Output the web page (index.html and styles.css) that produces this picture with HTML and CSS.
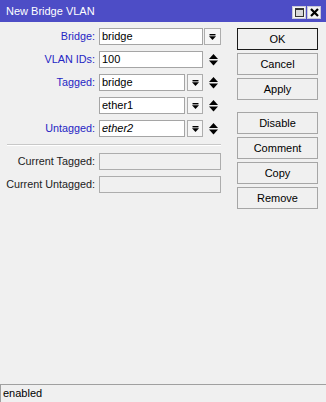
FILE: index.html
```html
<!DOCTYPE html>
<html>
<head>
<meta charset="utf-8">
<link rel="stylesheet" href="styles.css">
</head>
<body>
<div class="win">
  <div class="titlebar">
    <span class="title">New Bridge VLAN</span>
    <div class="tb-btns">
      <span class="tb-btn tb-max"><span class="max-sq"></span></span>
      <span class="tb-btn tb-close">
        <svg width="9" height="9" viewBox="0 0 9 9"><path d="M1 1 L8 8 M8 1 L1 8" stroke="#000" stroke-width="2.2" fill="none"/></svg>
      </span>
    </div>
  </div>
  <div class="main">
    <div class="form">
      <div class="row">
        <label class="lbl blue">Bridge:</label>
        <div class="field">
          <div class="input w-wide">bridge</div>
          <span class="dd dd-wide"><svg width="7" height="6" viewBox="0 0 7 6"><rect x="0.5" y="0" width="6" height="1.4" fill="#000"/><polygon points="0,2.2 7,2.2 3.5,6" fill="#000"/></svg></span>
        </div>
      </div>
      <div class="row">
        <label class="lbl blue">VLAN IDs:</label>
        <div class="field">
          <div class="input w-mid">100</div>
          <span class="ud"><svg width="9" height="12" viewBox="0 0 9 12"><polygon points="4.5,0 9,5 0,5" fill="#000"/><polygon points="0,6.5 9,6.5 4.5,11.5" fill="#000"/></svg></span>
        </div>
      </div>
      <div class="row">
        <label class="lbl blue">Tagged:</label>
        <div class="field">
          <div class="input w-short">bridge</div>
          <span class="dd"><svg width="7" height="6" viewBox="0 0 7 6"><rect x="0.5" y="0" width="6" height="1.4" fill="#000"/><polygon points="0,2.2 7,2.2 3.5,6" fill="#000"/></svg></span>
          <span class="ud"><svg width="9" height="12" viewBox="0 0 9 12"><polygon points="4.5,0 9,5 0,5" fill="#000"/><polygon points="0,6.5 9,6.5 4.5,11.5" fill="#000"/></svg></span>
        </div>
      </div>
      <div class="row">
        <label class="lbl"></label>
        <div class="field">
          <div class="input w-short">ether1</div>
          <span class="dd"><svg width="7" height="6" viewBox="0 0 7 6"><rect x="0.5" y="0" width="6" height="1.4" fill="#000"/><polygon points="0,2.2 7,2.2 3.5,6" fill="#000"/></svg></span>
          <span class="ud"><svg width="9" height="12" viewBox="0 0 9 12"><polygon points="4.5,0 9,5 0,5" fill="#000"/><polygon points="0,6.5 9,6.5 4.5,11.5" fill="#000"/></svg></span>
        </div>
      </div>
      <div class="row">
        <label class="lbl blue">Untagged:</label>
        <div class="field">
          <div class="input w-short ital">ether2</div>
          <span class="dd"><svg width="7" height="6" viewBox="0 0 7 6"><rect x="0.5" y="0" width="6" height="1.4" fill="#000"/><polygon points="0,2.2 7,2.2 3.5,6" fill="#000"/></svg></span>
          <span class="ud"><svg width="9" height="12" viewBox="0 0 9 12"><polygon points="4.5,0 9,5 0,5" fill="#000"/><polygon points="0,6.5 9,6.5 4.5,11.5" fill="#000"/></svg></span>
        </div>
      </div>
      <div class="sep"></div>
      <div class="row">
        <label class="lbl">Current Tagged:</label>
        <div class="field">
          <div class="input disabled w-full"></div>
        </div>
      </div>
      <div class="row">
        <label class="lbl">Current Untagged:</label>
        <div class="field">
          <div class="input disabled w-full"></div>
        </div>
      </div>
    </div>
    <div class="buttons">
      <div class="btn default">OK</div>
      <div class="btn">Cancel</div>
      <div class="btn">Apply</div>
      <div class="btn gap-top">Disable</div>
      <div class="btn">Comment</div>
      <div class="btn">Copy</div>
      <div class="btn">Remove</div>
    </div>
  </div>
  <div class="status">enabled</div>
</div>
</body>
</html>
```
FILE: styles.css
```css
html, body {
  margin: 0;
  padding: 0;
}
body {
  width: 326px;
  height: 402px;
  overflow: hidden;
  background: #f0f0f0;
  font-family: "Liberation Sans", Arial, sans-serif;
  font-size: 11px;
  color: #000;
}
.win {
  display: flex;
  flex-direction: column;
  height: 402px;
}
.titlebar {
  height: 22px;
  background: #4d4dc6;
  display: flex;
  align-items: center;
  justify-content: space-between;
  flex: none;
}
.title {
  color: #fff;
  padding-left: 6px;
  font-size: 11px;
}
.tb-btns {
  display: flex;
  gap: 1px;
  padding-right: 5px;
  padding-top: 3px;
}
.tb-btn {
  width: 14px;
  height: 13px;
  display: flex;
  align-items: center;
  justify-content: center;
  box-sizing: border-box;
  border: 1px solid #c8c8d8;
  background: #f4f4f4;
}
.max-sq {
  width: 9px;
  height: 9px;
  box-sizing: border-box;
  border: 1px solid #333;
  border-top-width: 2px;
  background: #d8d8d8;
}
.main {
  flex: 1;
  display: flex;
  padding-top: 6px;
}
.form {
  display: flex;
  flex-direction: column;
  width: 221px;
}
.row {
  display: flex;
  height: 17px;
  margin-bottom: 6px;
}
.lbl {
  width: 95px;
  text-align: right;
  line-height: 17px;
  margin-right: 4px;
  color: #222;
  white-space: nowrap;
  font-size: 10.8px;
}
.lbl.blue {
  color: #2626c4;
}
.field {
  display: flex;
  width: 122px;
}
.input {
  box-sizing: border-box;
  height: 17px;
  border: 1px solid #a5a5a5;
  background: #fff;
  line-height: 15px;
  padding-left: 2px;
}
.input.ital {
  font-style: italic;
}
.input.disabled {
  background: #f0f0f0;
  border-color: #adadad;
}
.w-wide { width: 104px; }
.w-mid { width: 104px; }
.w-short { width: 86px; }
.w-full { width: 122px; }
.dd {
  box-sizing: border-box;
  width: 16px;
  height: 17px;
  margin-left: 2px;
  border: 1px solid #adadad;
  background: #f6f6f6;
  display: flex;
  align-items: center;
  justify-content: center;
}
.dd-wide {
  width: 17px;
  margin-left: 1px;
}
.ud {
  width: 18px;
  display: flex;
  align-items: center;
  justify-content: center;
  padding-left: 2px;
  box-sizing: border-box;
}
.sep {
  margin: 1px 0 7px 7px;
  border-top: 1px solid #c8c8c8;
  border-bottom: 1px solid #fff;
  box-sizing: border-box;
  height: 2px;
}
.buttons {
  display: flex;
  flex-direction: column;
  margin-left: 16px;
  width: 81px;
}
.btn {
  box-sizing: border-box;
  height: 22px;
  margin-bottom: 3px;
  border: 1px solid #a6a6a6;
  background: #f0f0f0;
  text-align: center;
  line-height: 20px;
}
.btn.default {
  border-color: #1a1a1a;
}
.btn.gap-top {
  margin-top: 9px;
}
.status {
  flex: none;
  height: 18px;
  box-sizing: border-box;
  border-top: 1px solid #a0a0a0;
  border-left: 1px solid #a0a0a0;
  padding-left: 2px;
  line-height: 17px;
}
```
